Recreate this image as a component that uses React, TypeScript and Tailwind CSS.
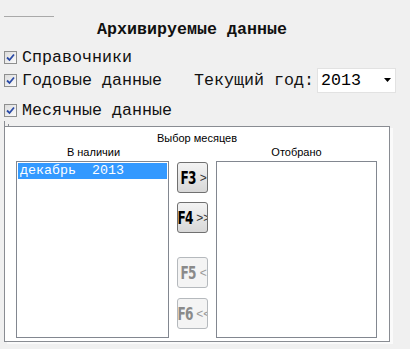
import React from "react";

const mono = { fontFamily: '"Liberation Mono", "Courier New", monospace' };
const sans = { fontFamily: '"Liberation Sans", Arial, sans-serif' };

const CheckBox = () => (
  <div className="w-[13px] h-[13px] shrink-0 border border-[#8e8f8f] bg-gradient-to-br from-[#dcdcdc] to-[#fbfbfb] flex items-center justify-center">
    <svg width="9" height="9" viewBox="0 0 9 9">
      <path d="M1 4.5 L3.5 7 L8 1.5" fill="none" stroke="#2a4aa6" strokeWidth="1.8" />
    </svg>
  </div>
);

const CheckRow = ({ label }: { label: string }) => (
  <div className="flex items-center pl-[4px] h-[22px]">
    <CheckBox />
    <span className="ml-[5px] text-[16.67px] leading-[19px] text-[#111] whitespace-pre">{label}</span>
  </div>
);

const FButton = ({ k, arrow, disabled }: { k: string; arrow: string; disabled?: boolean }) => (
  <div
    className={
      "w-[31px] h-[31px] rounded-[3px] border flex items-center justify-center overflow-hidden whitespace-nowrap " +
      (disabled
        ? "border-[#b5b9bd] bg-[#f4f4f4] text-[#8a8a8a]"
        : "border-[#707070] bg-gradient-to-b from-[#f3f3f3] to-[#d8d8d8] text-black")
    }
  >
    <span
      className="font-bold text-[18px] leading-none tracking-[-1px] inline-block scale-x-[0.75] -mr-[3px]"
      style={{ fontFamily: '"Liberation Sans Narrow", "DejaVu Sans Condensed", sans-serif' }}
    >
      {k}
    </span>
    <span
      className={"text-[12px] leading-none ml-[4px] " + (disabled ? "text-[#9a9a9a]" : "text-[#333]")}
      style={sans}
    >
      {arrow}
    </span>
  </div>
);

export default function App() {
  return (
    <div className="w-[410px] h-[349px] bg-[#f0f0f0] overflow-hidden" style={mono}>
      <div className="pt-[16px] pl-[4px]">
        <div className="w-[50px] h-px bg-[#a9a9a9]" />
      </div>
      <div className="pl-[97px] mt-[3px] h-[22px] text-[16.67px] leading-[19px] font-bold text-[#111]">
        Архивируемые данные
      </div>
      <div className="mt-[4px]">
        <CheckRow label="Справочники" />
        <div className="flex items-center pl-[4px] h-[28px] mt-[-2px]">
          <CheckBox />
          <span className="ml-[5px] text-[16.67px] leading-[19px] text-[#111]">Годовые данные</span>
          <span className="ml-[32px] text-[16.67px] leading-[19px] text-[#111]">Текущий год:</span>
          <div className="ml-[3px] w-[79px] h-[25px] bg-white border border-[#e2e2e2] flex items-center justify-between pl-[3px] pr-[4px]">
            <span className="text-[16.67px] leading-[19px] text-black">2013</span>
            <svg width="7" height="4" viewBox="0 0 7 4">
              <path d="M0 0 H7 L3.5 4 Z" fill="#000" />
            </svg>
          </div>
        </div>
        <div className="mt-[5px]">
          <CheckRow label="Месячные данные" />
        </div>
      </div>

      <div className="relative ml-[4px] mt-[5px] w-[386px] h-[216px] bg-white border border-[#898c92] shadow-[3px_2px_0_#fafafa]">
        <div className="absolute left-[-1px] top-[-6px] w-px h-[6px] bg-[#898c92]" />
        <div className="absolute left-[3px] top-[-3px] w-px h-[3px] bg-[#898c92]" />
        <div className="text-center text-[11px] leading-[13px] text-black mt-[5px]" style={sans}>
          Выбор месяцев
        </div>
        <div className="flex pl-[11px] mt-[1px] gap-[8px]" style={sans}>
          <div className="w-[153px]">
            <div className="text-center text-[11px] leading-[13px] text-black h-[15px] pl-[2px]">В наличии</div>
            <div className="h-[177px] border border-[#828790] bg-white p-px">
              <div
                className="h-[16px] bg-[#3399ff] text-white text-[13.33px] leading-[16px] pl-[2px] whitespace-pre"
                style={mono}
              >
                декабрь  2013
              </div>
            </div>
          </div>
          <div className="w-[31px] pt-[16px] flex flex-col">
            <FButton k="F3" arrow=">" />
            <div className="mt-[9px]">
              <FButton k="F4" arrow=">>" />
            </div>
            <div className="mt-[24px]">
              <FButton k="F5" arrow="<" disabled />
            </div>
            <div className="mt-[10px]">
              <FButton k="F6" arrow="<<" disabled />
            </div>
          </div>
          <div className="w-[161px]">
            <div className="text-center text-[11px] leading-[13px] text-black h-[15px]">Отобрано</div>
            <div className="h-[177px] border border-[#828790] bg-white" />
          </div>
        </div>
      </div>
    </div>
  );
}
